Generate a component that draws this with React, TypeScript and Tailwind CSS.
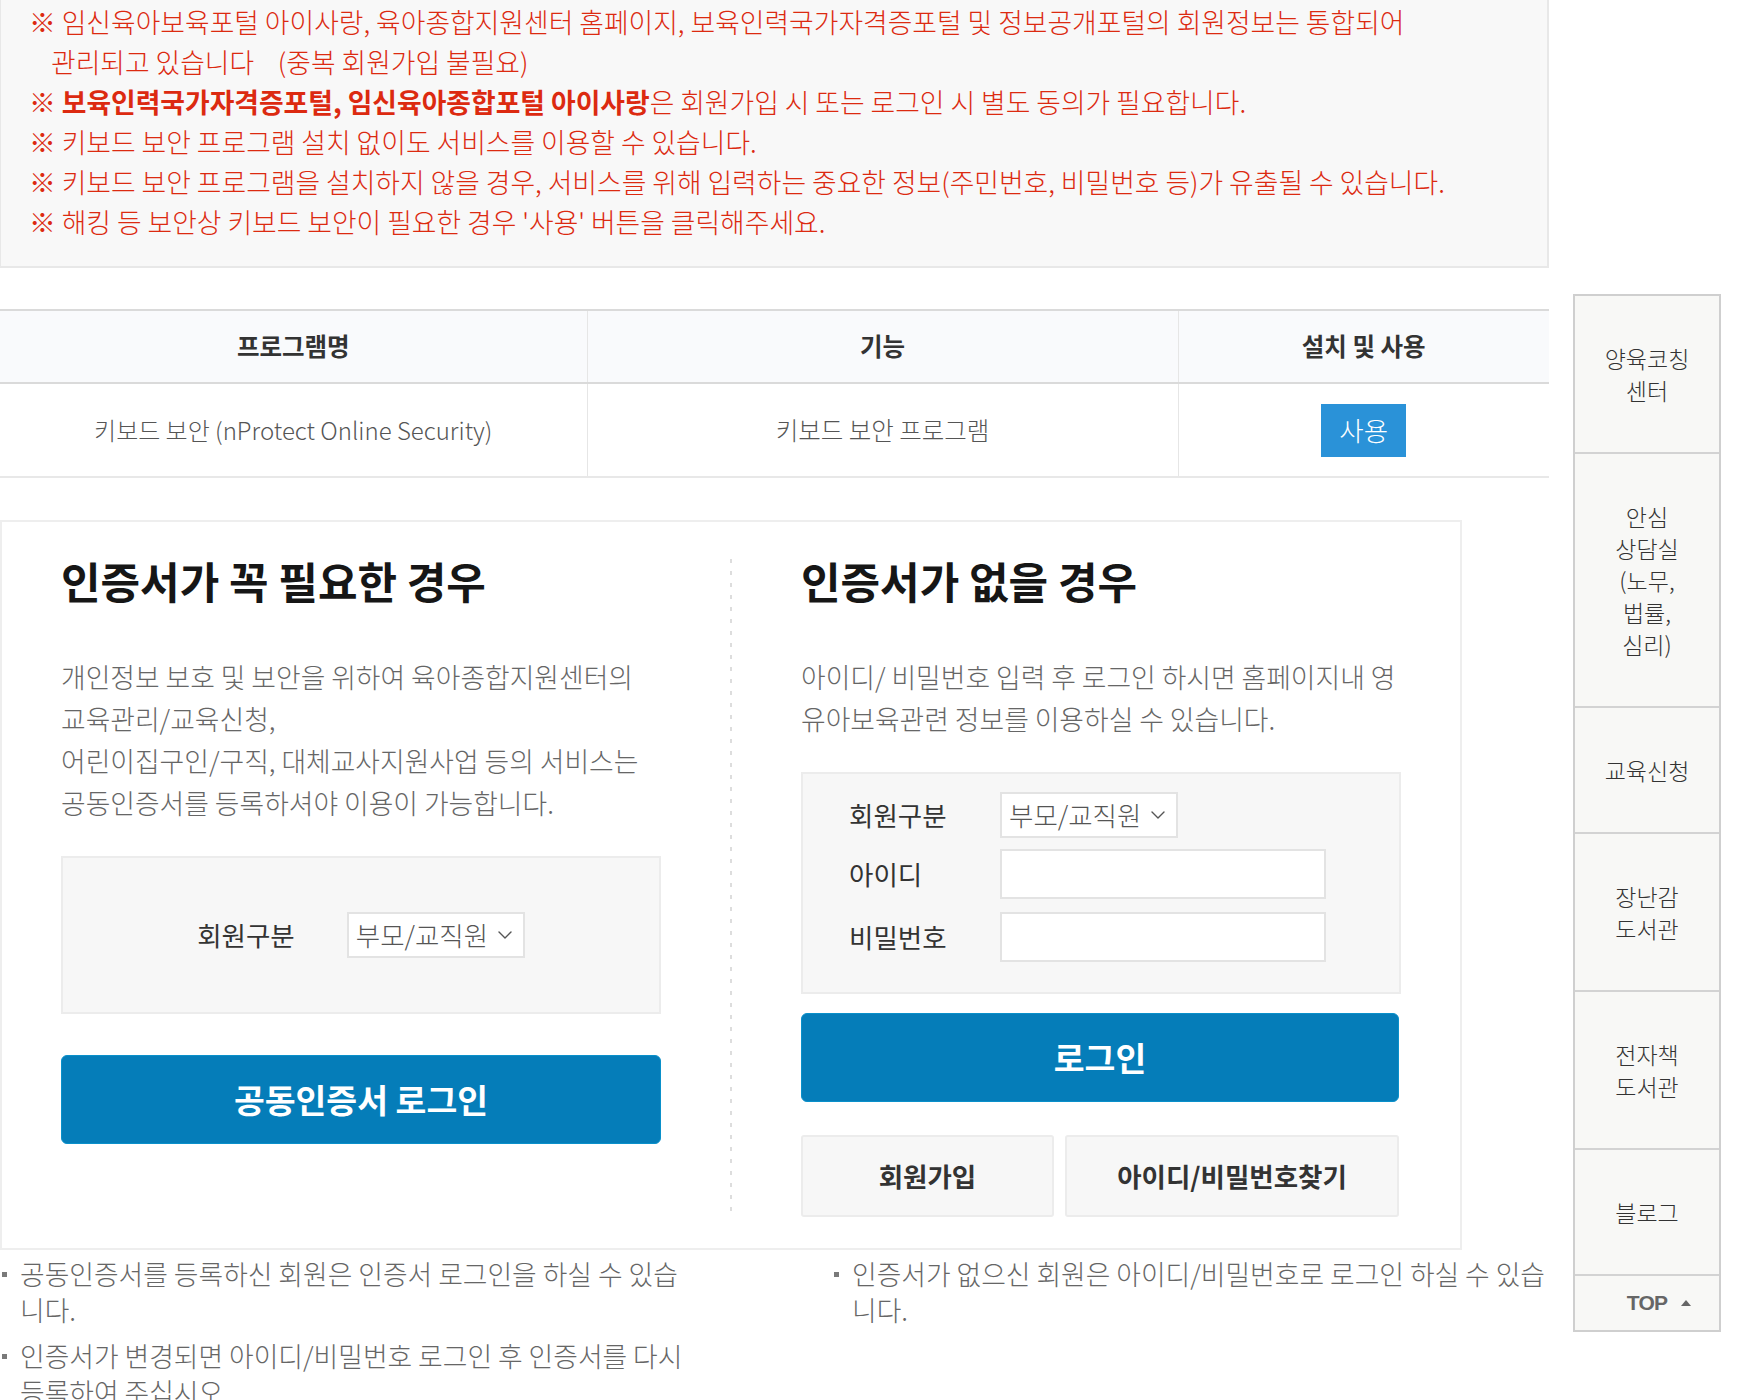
import React from 'react';
import { ChevronDown } from 'lucide-react';

const font = "font-['Noto_Sans_CJK_KR','Noto_Sans',sans-serif]";

function MemberSelect() {
  return (
    <div className="w-[178px] h-[46px] bg-white border-2 border-[#e3e3e3] flex items-center justify-between pl-[7px] pr-[6px]">
      <span className="text-[26.5px] leading-none text-[#555] font-light">부모/교직원</span>
      <ChevronDown size={24} strokeWidth={1.4} className="text-[#555]" />
    </div>
  );
}

function Bullet({ children }: { children: React.ReactNode }) {
  return (
    <li className="flex">
      <span className="mt-[16px] ml-[2px] w-[5px] h-[5px] bg-[#7a7a7a] shrink-0" />
      <span className="ml-[13px] whitespace-nowrap">{children}</span>
    </li>
  );
}

const menu = [
  ['양육코칭', '센터'],
  ['안심', '상담실', '(노무,', '법률,', '심리)'],
  ['교육신청'],
  ['장난감', '도서관'],
  ['전자책', '도서관'],
  ['블로그'],
];

export default function App() {
  return (
    <div className={`${font} bg-white w-[1744px] h-[1400px] overflow-hidden flex items-start`}>
      <main className="w-[1549px] shrink-0">
        {/* Notice */}
        <div className="bg-[#f8f8f8] border-l border-r-2 border-b-2 border-[#e8e8e8] pt-[2px] pb-[24px] pl-[28px] text-[26.8px] leading-[40px] text-[#dc2a10] font-light">
          <p>※ 임신육아보육포털 아이사랑, 육아종합지원센터 홈페이지, 보육인력국가자격증포털 및 정보공개포털의 회원정보는 통합되어</p>
          <p className="pl-[22px]">관리되고 있습니다&nbsp;&nbsp;&nbsp;&nbsp;(중복 회원가입 불필요)</p>
          <p>
            ※ <b className="font-bold">보육인력국가자격증포털, 임신육아종합포털 아이사랑</b>은 회원가입 시 또는 로그인 시 별도 동의가 필요합니다.
          </p>
          <p>※ 키보드 보안 프로그램 설치 없이도 서비스를 이용할 수 있습니다.</p>
          <p>※ 키보드 보안 프로그램을 설치하지 않을 경우, 서비스를 위해 입력하는 중요한 정보(주민번호, 비밀번호 등)가 유출될 수 있습니다.</p>
          <p>※ 해킹 등 보안상 키보드 보안이 필요한 경우 '사용' 버튼을 클릭해주세요.</p>
        </div>

        {/* Program table */}
        <table className="mt-[41px] w-full table-fixed border-collapse">
          <colgroup>
            <col className="w-[587px]" />
            <col className="w-[591px]" />
            <col />
          </colgroup>
          <thead>
            <tr className="bg-[#f9fafc] border-t-2 border-b-2 border-[#dadada] h-[73px]">
              <th className="text-[24.5px] font-bold text-[#333]">프로그램명</th>
              <th className="text-[24.5px] font-bold text-[#333] border-l border-[#e6e6e6]">기능</th>
              <th className="text-[24.5px] font-bold text-[#333] border-l border-[#e6e6e6]">설치 및 사용</th>
            </tr>
          </thead>
          <tbody>
            <tr className="border-b-2 border-[#e8e8e8] h-[94px]">
              <td className="text-center text-[24px] text-[#555] font-light">키보드 보안 (nProtect Online Security)</td>
              <td className="text-center text-[24.5px] text-[#555] font-light border-l border-[#e6e6e6]">키보드 보안 프로그램</td>
              <td className="text-center border-l border-[#e6e6e6]">
                <button className="w-[85px] h-[53px] bg-[#2a92d8] text-white text-[26.5px] font-light leading-none">사용</button>
              </td>
            </tr>
          </tbody>
        </table>

        {/* Login box */}
        <div className="mt-[42px] w-[1462px] border-2 border-[#eeeeee] flex px-[59px] pt-[33px] pb-[31px]">
          {/* left: certificate */}
          <section className="w-[600px] shrink-0">
            <h2 className="text-[43px] leading-[50px] font-bold text-[#161616]">인증서가 꼭 필요한 경우</h2>
            <p className="mt-[51px] text-[26.8px] leading-[42px] text-[#666] font-light whitespace-nowrap">
              개인정보 보호 및 보안을 위하여 육아종합지원센터의
              <br />
              교육관리/교육신청,
              <br />
              어린이집구인/구직, 대체교사지원사업 등의 서비스는
              <br />
              공동인증서를 등록하셔야 이용이 가능합니다.
            </p>
            <div className="mt-[32px] h-[158px] bg-[#f7f7f7] border-2 border-[#ececec] flex items-center justify-center gap-[52px]">
              <span className="text-[26.5px] text-[#333]">회원구분</span>
              <MemberSelect />
            </div>
            <button className="mt-[41px] w-full h-[89px] rounded-[6px] bg-[#057db9] border border-[#0a90ca] text-white text-[33.5px] font-bold">
              공동인증서 로그인
            </button>
          </section>

          {/* divider */}
          <div className="w-[140px] shrink-0 flex justify-center pt-[4px]">
            <div className="w-[2px] bg-[linear-gradient(to_bottom,#dddddd_4px,transparent_4px)] bg-[length:2px_12px] bg-repeat-y" />
          </div>

          {/* right: id/password */}
          <section className="w-[600px] shrink-0">
            <h2 className="text-[43px] leading-[50px] font-bold text-[#161616]">인증서가 없을 경우</h2>
            <p className="mt-[51px] text-[26.8px] leading-[42px] text-[#666] font-light whitespace-nowrap">
              아이디/ 비밀번호 입력 후 로그인 하시면 홈페이지내 영
              <br />
              유아보육관련 정보를 이용하실 수 있습니다.
            </p>
            <div className="mt-[32px] h-[222px] bg-[#f7f7f7] border-2 border-[#ececec] pl-[46px] pt-[18px]">
              <div className="flex items-center">
                <span className="w-[151px] text-[26.5px] text-[#333]">회원구분</span>
                <MemberSelect />
              </div>
              <div className="flex items-center mt-[11px]">
                <span className="w-[151px] text-[26.5px] text-[#333]">아이디</span>
                <input className="w-[326px] h-[50px] bg-white border-2 border-[#e3e3e3] outline-none" />
              </div>
              <div className="flex items-center mt-[13px]">
                <span className="w-[151px] text-[26.5px] text-[#333]">비밀번호</span>
                <input type="password" className="w-[326px] h-[50px] bg-white border-2 border-[#e3e3e3] outline-none" />
              </div>
            </div>
            <button className="mt-[19px] w-[598px] h-[89px] rounded-[6px] bg-[#057db9] border border-[#0a90ca] text-white text-[33.5px] font-bold">
              로그인
            </button>
            <div className="mt-[33px] flex gap-[11px] w-[598px]">
              <button className="w-[253px] h-[82px] rounded-[3px] bg-[#f7f7f7] border-2 border-[#ececec] text-[26.5px] font-bold text-[#333]">
                회원가입
              </button>
              <button className="flex-1 h-[82px] rounded-[3px] bg-[#f7f7f7] border-2 border-[#ececec] text-[26.5px] font-bold text-[#333]">
                아이디/비밀번호찾기
              </button>
            </div>
          </section>
        </div>

        {/* Notes */}
        <div className="mt-[6px] flex text-[26.8px] leading-[36px] text-[#666] font-light">
          <ul className="w-[832px] shrink-0 space-y-[10px]">
            <Bullet>
              공동인증서를 등록하신 회원은 인증서 로그인을 하실 수 있습
              <br />
              니다.
            </Bullet>
            <Bullet>
              인증서가 변경되면 아이디/비밀번호 로그인 후 인증서를 다시
              <br />
              등록하여 주십시오.
            </Bullet>
          </ul>
          <ul className="flex-1">
            <Bullet>
              인증서가 없으신 회원은 아이디/비밀번호로 로그인 하실 수 있습
              <br />
              니다.
            </Bullet>
          </ul>
        </div>
      </main>

      {/* Quick menu */}
      <aside className="ml-[24px] mt-[294px] w-[148px] shrink-0 border-2 border-[#cfcfcf] bg-[#f8f8f6]">
        {menu.map((lines, i) => (
          <div key={i} className="border-b-2 border-[#d3d3d3] py-[46px] text-center text-[23px] leading-[32px] text-[#333] font-light">
            {lines.map((l, j) => (
              <div key={j}>{l}</div>
            ))}
          </div>
        ))}
        <div className="h-[54px] flex items-center justify-center pl-[24px] gap-[14px]">
          <span className="font-['Liberation_Sans',sans-serif] font-bold text-[21px] tracking-[-0.8px] text-[#666]">TOP</span>
          <span className="w-0 h-0 border-l-[5px] border-r-[5px] border-b-[6px] border-l-transparent border-r-transparent border-b-[#666]" />
        </div>
      </aside>
    </div>
  );
}
